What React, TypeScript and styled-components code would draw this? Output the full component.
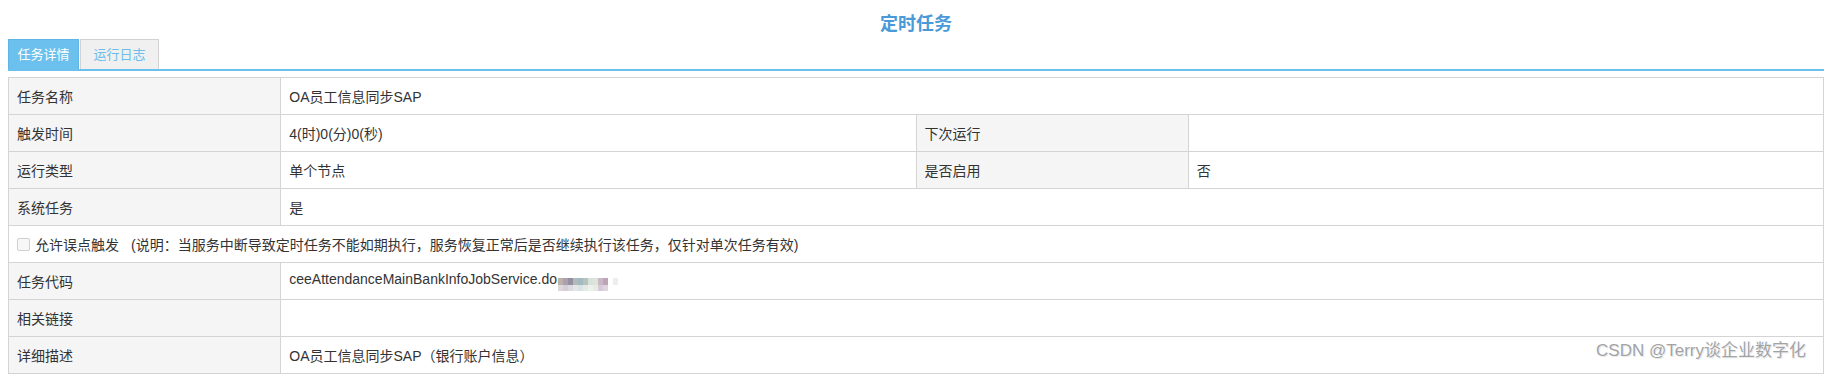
import React from "react";
import styled, { createGlobalStyle } from "styled-components";

const GlobalStyle = createGlobalStyle`
  html, body {
    margin: 0;
    padding: 0;
    background: #fff;
  }
  body {
    font-family: "Liberation Sans", "Noto Sans CJK SC", sans-serif;
    color: #333;
  }
`;

const Page = styled.div`
  position: relative;
  padding: 0 2px 4px 8px;
`;

const Title = styled.h2`
  margin: 0;
  height: 39px;
  box-sizing: border-box;
  padding-top: 12px;
  line-height: 24px;
  font-size: 18px;
  font-weight: bold;
  text-align: center;
  color: #4a9ad8;
`;

const TabBar = styled.div`
  display: flex;
  gap: 1px;
  border-bottom: 2px solid #6bc0ed;
`;

const Tab = styled.div<{ $active?: boolean; $pad: number }>`
  height: 29px;
  line-height: 29px;
  padding: 0 ${(p) => p.$pad}px;
  font-size: 13px;
  border: 1px solid ${(p) => (p.$active ? "#5fb6e6" : "#d2d2d2")};
  border-bottom: none;
  background: ${(p) => (p.$active ? "#6bc0ed" : "#f0f0f0")};
  color: ${(p) => (p.$active ? "#fff" : "#6bbdea")};
`;

const Table = styled.table`
  margin-top: 6px;
  width: 100%;
  border-collapse: collapse;
  table-layout: fixed;
  border: 1px solid #d4d4d4;
  font-size: 14px;
`;

const Row = styled.tr`
  height: 37px;
`;

const Cell = styled.td<{ $label?: boolean }>`
  padding: 0 8px;
  border: 1px solid #d4d4d4;
  background: ${(p) => (p.$label ? "#f5f5f5" : "#fff")};
  color: #333;
  white-space: nowrap;
  vertical-align: middle;
`;

const CheckLine = styled.div`
  display: flex;
  align-items: center;
`;

const Box = styled.span`
  width: 11px;
  height: 11px;
  border: 1px solid #cfcfcf;
  border-radius: 2px;
  background: #f7f7f7;
  margin-right: 5px;
`;

const Note = styled.span`
  margin-left: 12px;
`;

// pixelated blur over the masked part of the task code
const Mosaic = styled.span`
  display: inline-grid;
  grid-template-columns: repeat(12, 5px);
  grid-auto-rows: 6.5px;
  vertical-align: -1px;
  margin-left: 1px;
`;

const Tile = styled.span<{ $c: string }>`
  background: ${(p) => p.$c};
`;

const Watermark = styled.div`
  position: absolute;
  right: 20px;
  bottom: 16px;
  font-size: 17px;
  line-height: 22px;
  color: #a3a3a3;
  text-shadow: 0 0 1px #fff, 1px 1px 0 #e8e8e8;
`;

const mosaicColors = [
  "#bfb0aa", "#ab9fb3", "#968f9d", "#b3b8bd", "#a1bbc0", "#b8c2bf",
  "#d6e2dc", "#dee4d8", "#c8b8c8", "#bca6b5", "#fff", "#f0ecf2",
  "#ded8dc", "#d4ced8", "#dadae0", "#e3e7e7", "#dae3e3", "#e6eae6",
  "#edf1ed", "#eaeae4", "#d6cada", "#dfd5dd", "#fff", "#fff",
];

function App() {
  return (
    <>
      <GlobalStyle />
      <Page>
        <Title>定时任务</Title>
        <TabBar>
          <Tab $active $pad={8.5}>任务详情</Tab>
          <Tab $pad={12.5}>运行日志</Tab>
        </TabBar>
        <Table>
          <colgroup>
            <col style={{ width: "15%" }} />
            <col style={{ width: "35%" }} />
            <col style={{ width: "15%" }} />
            <col style={{ width: "35%" }} />
          </colgroup>
          <tbody>
            <Row>
              <Cell $label>任务名称</Cell>
              <Cell colSpan={3}>OA员工信息同步SAP</Cell>
            </Row>
            <Row>
              <Cell $label>触发时间</Cell>
              <Cell>4(时)0(分)0(秒)</Cell>
              <Cell $label>下次运行</Cell>
              <Cell></Cell>
            </Row>
            <Row>
              <Cell $label>运行类型</Cell>
              <Cell>单个节点</Cell>
              <Cell $label>是否启用</Cell>
              <Cell>否</Cell>
            </Row>
            <Row>
              <Cell $label>系统任务</Cell>
              <Cell colSpan={3}>是</Cell>
            </Row>
            <Row>
              <Cell colSpan={4}>
                <CheckLine>
                  <Box />
                  允许误点触发
                  <Note>
                    (说明：当服务中断导致定时任务不能如期执行，服务恢复正常后是否继续执行该任务，仅针对单次任务有效)
                  </Note>
                </CheckLine>
              </Cell>
            </Row>
            <Row>
              <Cell $label>任务代码</Cell>
              <Cell colSpan={3}>
                ceeAttendanceMainBankInfoJobService.do
                <Mosaic>
                  {mosaicColors.map((c, i) => (
                    <Tile key={i} $c={c} />
                  ))}
                </Mosaic>
              </Cell>
            </Row>
            <Row>
              <Cell $label>相关链接</Cell>
              <Cell colSpan={3}></Cell>
            </Row>
            <Row>
              <Cell $label>详细描述</Cell>
              <Cell colSpan={3}>OA员工信息同步SAP（银行账户信息）</Cell>
            </Row>
          </tbody>
        </Table>
        <Watermark>CSDN @Terry谈企业数字化</Watermark>
      </Page>
    </>
  );
}

export default App;
